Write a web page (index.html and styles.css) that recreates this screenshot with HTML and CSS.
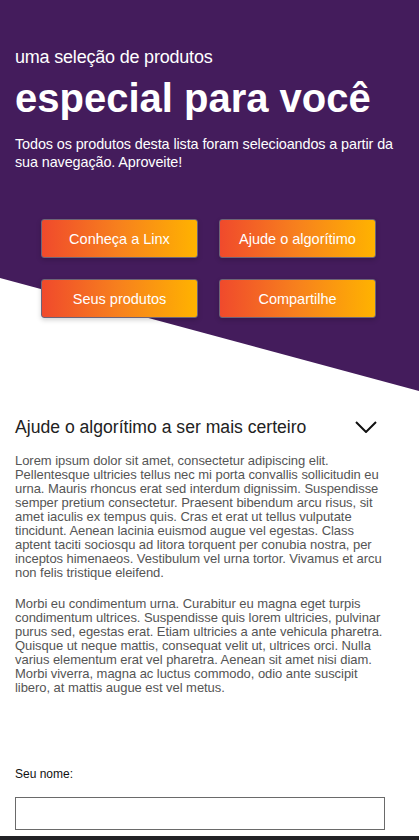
FILE: index.html
```html
<!DOCTYPE html>
<html lang="pt-BR">
<head>
<meta charset="utf-8">
<title>Especial para você</title>
<link rel="stylesheet" href="styles.css">
</head>
<body>
<header class="hero">
  <p class="kicker">uma seleção de produtos</p>
  <h1 class="title">especial para você</h1>
  <p class="lead">Todos os produtos desta lista foram selecioandos a partir da sua navegação. Aproveite!</p>
  <div class="actions">
    <a class="btn" href="#">Conheça a Linx</a>
    <a class="btn" href="#">Ajude o algorítimo</a>
    <a class="btn" href="#">Seus produtos</a>
    <a class="btn" href="#">Compartilhe</a>
  </div>
</header>
<section class="about">
  <div class="about-head">
    <h2 class="about-title">Ajude o algorítimo a ser mais certeiro</h2>
    <svg class="chevron" width="22" height="12" viewBox="0 0 22 12"><polyline points="1,1 11,11 21,1" fill="none" stroke="#111" stroke-width="2"/></svg>
  </div>
  <p class="text">Lorem ipsum dolor sit amet, consectetur adipiscing elit. Pellentesque ultricies tellus nec mi porta convallis sollicitudin eu urna. Mauris rhoncus erat sed interdum dignissim. Suspendisse semper pretium consectetur. Praesent bibendum arcu risus, sit amet iaculis ex tempus quis. Cras et erat ut tellus vulputate tincidunt. Aenean lacinia euismod augue vel egestas. Class aptent taciti sociosqu ad litora torquent per conubia nostra, per inceptos himenaeos. Vestibulum vel urna tortor. Vivamus et arcu non felis tristique eleifend.</p>
  <p class="text text-second">Morbi eu condimentum urna. Curabitur eu magna eget turpis condimentum ultrices. Suspendisse quis lorem ultricies, pulvinar purus sed, egestas erat. Etiam ultricies a ante vehicula pharetra. Quisque ut neque mattis, consequat velit ut, ultrices orci. Nulla varius elementum erat vel pharetra. Aenean sit amet nisi diam. Morbi viverra, magna ac luctus commodo, odio ante suscipit libero, at mattis augue est vel metus.</p>
</section>
<form class="form">
  <label class="label" for="nome">Seu nome:</label>
  <input class="input" id="nome" type="text">
</form>
<footer class="footer"></footer>
</body>
</html>
```
FILE: styles.css
```css
* { box-sizing: border-box; }
html, body { margin: 0; padding: 0; }
body {
  font-family: "Liberation Sans", Arial, sans-serif;
  background: #fff;
  color: #222;
  width: 419px;
}
.hero {
  position: relative;
  height: 391px;
  padding: 46px 15px 0 15px;
  color: #fff;
}
.hero::before {
  content: "";
  position: absolute;
  inset: 0;
  background: #441c5c;
  clip-path: polygon(0 0, 100% 0, 100% 100%, 0 71.1%);
  z-index: 0;
}
.hero > * { position: relative; z-index: 1; }
.kicker {
  margin: 0;
  font-size: 18px;
  line-height: 22px;
  letter-spacing: -0.2px;
}
.title {
  margin: 8px 0 0;
  font-size: 40px;
  line-height: 44px;
  font-weight: 700;
}
.lead {
  margin: 15px 0 0;
  font-size: 14.4px;
  line-height: 18px;
  letter-spacing: -0.1px;
}
.actions {
  margin: 48px 0 0 26px;
  display: grid;
  grid-template-columns: 157px 157px;
  column-gap: 21px;
  row-gap: 21px;
}
.btn {
  display: flex;
  align-items: center;
  justify-content: center;
  height: 39px;
  border: 1px solid #6d6478;
  border-radius: 3px;
  background: linear-gradient(to right, #f04a2c 0%, #f7811d 50%, #ffb300 100%);
  box-shadow: 0 2px 5px rgba(0, 0, 0, 0.18);
  color: #fff;
  font-size: 14.5px;
  text-decoration: none;
}
.about {
  padding: 24px 30px 0 15px;
}
.about-head {
  display: flex;
  align-items: center;
  justify-content: space-between;
  padding-right: 4px;
}
.about-title {
  margin: 0;
  font-size: 17.6px;
  line-height: 24px;
  font-weight: 400;
  color: #222;
  letter-spacing: 0;
}
.chevron { margin-right: 8px; display: block; }
.text {
  margin: 15px 0 0;
  font-size: 13px;
  line-height: 14px;
  color: #555;
  letter-spacing: -0.05px;
}
.text-second { margin-top: 17px; }
.form {
  display: flex;
  flex-direction: column;
  padding: 72px 34px 0 15px;
}
.label {
  font-size: 12px;
  line-height: 14px;
  color: #111;
}
.input {
  margin-top: 16px;
  height: 33px;
  width: 370px;
  border: 1.5px solid #6a6a6a;
  border-radius: 0;
  background: #fff;
}
.footer {
  margin-top: 6px;
  height: 40px;
  background: #222226;
}
```
